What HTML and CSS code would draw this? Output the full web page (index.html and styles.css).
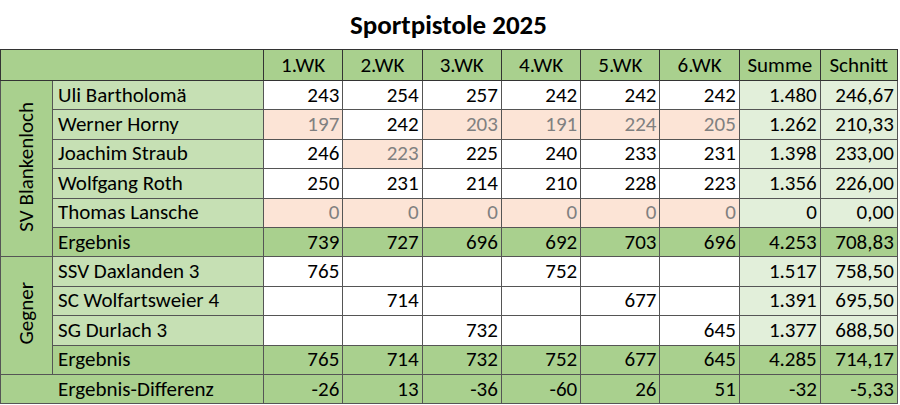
FILE: index.html
```html
<!DOCTYPE html>
<html lang="de">
<head>
<meta charset="utf-8">
<title>Sportpistole 2025</title>
<link rel="stylesheet" href="styles.css">
</head>
<body>
<div class="sheet">
  <h1 class="title">Sportpistole 2025</h1>
  <table class="grid">
    <colgroup>
      <col class="c-group"><col class="c-name">
      <col class="c-wk"><col class="c-wk"><col class="c-wk"><col class="c-wk"><col class="c-wk"><col class="c-wk">
      <col class="c-sum"><col class="c-avg">
    </colgroup>
    <thead>
      <tr class="head">
        <th colspan="2" class="corner"></th>
        <th>1.WK</th><th>2.WK</th><th>3.WK</th><th>4.WK</th><th>5.WK</th><th>6.WK</th>
        <th class="sum">Summe</th><th class="avg">Schnitt</th>
      </tr>
    </thead>
    <tbody class="block">
      <tr>
        <th rowspan="6" class="group"><span class="vert">SV Blankenloch</span></th>
        <td class="name">Uli Bartholomä</td>
        <td class="n">243</td><td class="n">254</td><td class="n">257</td><td class="n">242</td><td class="n">242</td><td class="n">242</td>
        <td class="n sum">1.480</td><td class="n avg">246,67</td>
      </tr>
      <tr>
        <td class="name">Werner Horny</td>
        <td class="n low">197</td><td class="n">242</td><td class="n low">203</td><td class="n low">191</td><td class="n low">224</td><td class="n low">205</td>
        <td class="n sum">1.262</td><td class="n avg">210,33</td>
      </tr>
      <tr>
        <td class="name">Joachim Straub</td>
        <td class="n">246</td><td class="n low">223</td><td class="n">225</td><td class="n">240</td><td class="n">233</td><td class="n">231</td>
        <td class="n sum">1.398</td><td class="n avg">233,00</td>
      </tr>
      <tr>
        <td class="name">Wolfgang Roth</td>
        <td class="n">250</td><td class="n">231</td><td class="n">214</td><td class="n">210</td><td class="n">228</td><td class="n">223</td>
        <td class="n sum">1.356</td><td class="n avg">226,00</td>
      </tr>
      <tr>
        <td class="name">Thomas Lansche</td>
        <td class="n low">0</td><td class="n low">0</td><td class="n low">0</td><td class="n low">0</td><td class="n low">0</td><td class="n low">0</td>
        <td class="n sum">0</td><td class="n avg">0,00</td>
      </tr>
      <tr class="total">
        <td class="name">Ergebnis</td>
        <td class="n">739</td><td class="n">727</td><td class="n">696</td><td class="n">692</td><td class="n">703</td><td class="n">696</td>
        <td class="n sum">4.253</td><td class="n avg">708,83</td>
      </tr>
    </tbody>
    <tbody class="block">
      <tr>
        <th rowspan="4" class="group"><span class="vert">Gegner</span></th>
        <td class="name">SSV Daxlanden 3</td>
        <td class="n">765</td><td class="n"></td><td class="n"></td><td class="n">752</td><td class="n"></td><td class="n"></td>
        <td class="n sum">1.517</td><td class="n avg">758,50</td>
      </tr>
      <tr>
        <td class="name">SC Wolfartsweier 4</td>
        <td class="n"></td><td class="n">714</td><td class="n"></td><td class="n"></td><td class="n">677</td><td class="n"></td>
        <td class="n sum">1.391</td><td class="n avg">695,50</td>
      </tr>
      <tr>
        <td class="name">SG Durlach 3</td>
        <td class="n"></td><td class="n"></td><td class="n">732</td><td class="n"></td><td class="n"></td><td class="n">645</td>
        <td class="n sum">1.377</td><td class="n avg">688,50</td>
      </tr>
      <tr class="total">
        <td class="name">Ergebnis</td>
        <td class="n">765</td><td class="n">714</td><td class="n">732</td><td class="n">752</td><td class="n">677</td><td class="n">645</td>
        <td class="n sum">4.285</td><td class="n avg">714,17</td>
      </tr>
    </tbody>
    <tbody class="block">
      <tr class="total diff">
        <td colspan="2" class="name diffname">Ergebnis-Differenz</td>
        <td class="n">-26</td><td class="n">13</td><td class="n">-36</td><td class="n">-60</td><td class="n">26</td><td class="n">51</td>
        <td class="n sum">-32</td><td class="n avg">-5,33</td>
      </tr>
    </tbody>
  </table>
</div>
</body>
</html>
```

FILE: styles.css
```css
html, body {
  margin: 0;
  padding: 0;
  background: #ffffff;
}

.sheet {
  width: 897px;
  font-family: "Carlito", "Lato", "Open Sans", sans-serif;
  color: #000000;
}

.title {
  margin: 0;
  height: 49px;
  line-height: 50px;
  text-align: center;
  font-size: 27px;
  font-weight: 700;
}

.grid {
  width: 897px;
  border-collapse: collapse;
  table-layout: fixed;
  font-size: 21px;
  border: 1px solid #333333;
}

.c-group { width: 52px; }
.c-name { width: 211px; }
.c-wk { width: 79.3px; }
.c-sum { width: 81px; }
.c-avg { width: 77px; }

.grid th,
.grid td {
  padding: 0 3px;
  border: 1px solid #555555;
  white-space: nowrap;
  overflow: hidden;
  font-weight: 400;
  line-height: 1;
}

.head th {
  height: 30px;
  background: #a9d08e;
  text-align: center;
  border-color: #333333;
  border-bottom: 1px solid #333333;
}

.grid tbody tr {
  height: 29.4px;
}

.block {
  border-top: 1px solid #333333;
}

.group {
  background: #a9d08e;
  border-right: 1px solid #333333;
  text-align: center;
  vertical-align: middle;
}

.grid .group {
  padding: 0;
}

.vert {
  display: inline-block;
  writing-mode: vertical-rl;
  transform: rotate(180deg);
  line-height: 1;
}

.name {
  background: #c6e0b4;
  text-align: left;
  border-right: 1px solid #333333;
}

.grid .name {
  padding-left: 5px;
}

.n {
  text-align: right;
  background: #ffffff;
  border-left-color: #b8b8b8;
  border-right-color: #b8b8b8;
}

.n.low {
  background: #fce4d6;
  color: #808080;
}

.n.sum {
  background: #e2efda;
  border-left: 1px solid #333333;
}

.n.avg {
  background: #e2efda;
}

.total td,
.total .n.sum,
.total .n.avg {
  background: #a9d08e;
  border-top: 1px solid #333333;
}

.total .n {
  border-left-color: #555555;
  border-right-color: #555555;
}

.total .n.sum {
  border-left-color: #333333;
}

.grid .diffname {
  padding-left: 57px;
}
```
